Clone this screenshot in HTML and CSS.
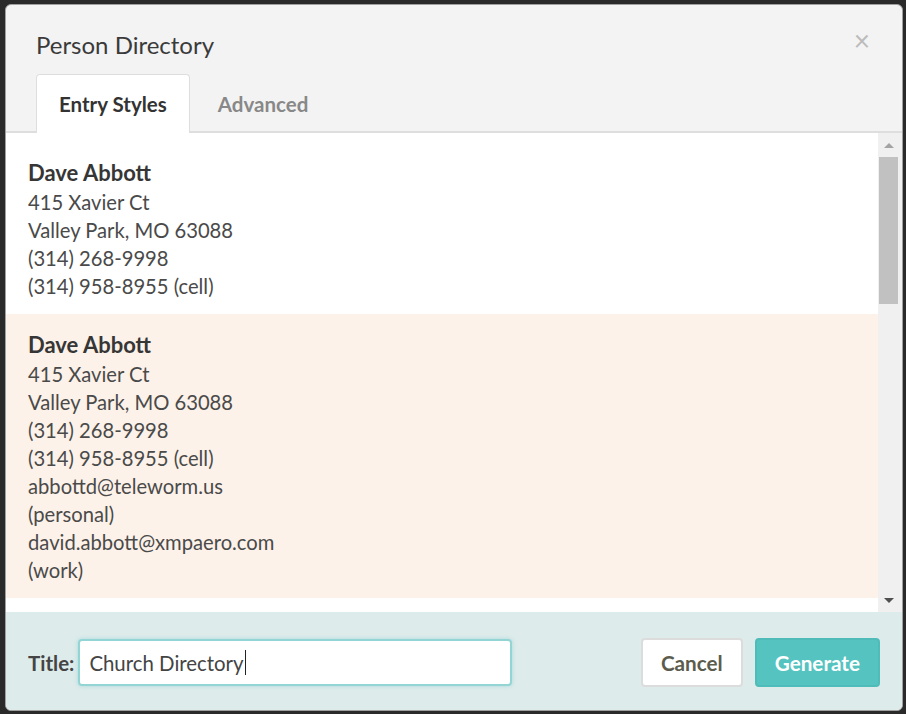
FILE: index.html
```html
<!DOCTYPE html>
<html lang="en">
<head>
    <meta charset="UTF-8">
    <meta name="viewport" content="width=device-width, initial-scale=1.0">
    <title>Person Directory</title>
    <link rel="stylesheet" href="styles.css">
</head>
<body>
    <div class="modal">
        <div class="modal-header">
            <div class="header-top">
                <h1 class="modal-title">Person Directory</h1>
                <span class="close">&times;</span>
            </div>
            <div class="tabs">
                <div class="tab active">Entry Styles</div>
                <div class="tab">Advanced</div>
            </div>
        </div>

        <div class="modal-body">
            <div class="entries">
                <div class="entry">
                    <div class="name">Dave Abbott</div>
                    <div>415 Xavier Ct</div>
                    <div>Valley Park, MO 63088</div>
                    <div>(314) 268-9998</div>
                    <div>(314) 958-8955 (cell)</div>
                </div>
                <div class="entry selected">
                    <div class="name">Dave Abbott</div>
                    <div>415 Xavier Ct</div>
                    <div>Valley Park, MO 63088</div>
                    <div>(314) 268-9998</div>
                    <div>(314) 958-8955 (cell)</div>
                    <div>abbottd@teleworm.us</div>
                    <div>(personal)</div>
                    <div>david.abbott@xmpaero.com</div>
                    <div>(work)</div>
                </div>
            </div>
            <!-- scrollbar -->
            <div class="scrollbar">
                <div class="arrow up"></div>
                <div class="track">
                    <div class="thumb"></div>
                </div>
                <div class="arrow down"></div>
            </div>
        </div>

        <div class="modal-footer">
            <label class="title-label">Title:</label>
            <div class="title-input">Church Directory<span class="caret"></span></div>
            <div class="actions">
                <button class="btn">Cancel</button>
                <button class="btn primary">Generate</button>
            </div>
        </div>
    </div>
</body>
</html>
```

FILE: styles.css
```css
* {
    box-sizing: border-box;
}

html, body {
    height: 100%;
}

body {
    margin: 0;
    padding: 4px 3px 3px 5px;
    background: #2a2a2a;
    font-family: Lato, "Open Sans", sans-serif;
    color: #333;
}

.modal {
    height: 100%;
    display: flex;
    flex-direction: column;
    background: #f3f3f3;
    border: 1px solid #a0a0a0;
    border-radius: 6px;
    overflow: hidden;
}

.modal-header {
    padding: 0 0 0 30px;
    border-bottom: 2px solid #dedede;
}

.header-top {
    display: flex;
    justify-content: space-between;
    align-items: center;
    height: 69px;
    padding-right: 32px;
}

.modal-title {
    margin: 9px 0 0;
    font-size: 24px;
    font-weight: 400;
    color: #3a3a3a;
}

.close {
    font-size: 28px;
    color: #bbb;
    margin-top: 1px;
}

.tabs {
    display: flex;
    margin-bottom: -2px;
}

.tab {
    padding: 17px 22px 17px;
    font-size: 20.5px;
    font-weight: 700;
    color: #888;
    border: 1px solid transparent;
    border-bottom: none;
    border-radius: 4px 4px 0 0;
    margin-right: 5px;
}

.tab.active {
    background: #fff;
    color: #333;
    border-color: #dedede;
}

.modal-body {
    flex: 1;
    display: flex;
    background: #fff;
    min-height: 0;
}

.entries {
    flex: 1;
    padding-top: 9px;
    font-size: 20.2px;
    line-height: 28px;
    color: #4a4a4a;
}

.entry {
    padding: 16px 22px 14px;
}

.entry.selected {
    background: #fdf2e9;
}

.name {
    font-size: 22px;
    font-weight: 700;
    line-height: 30px;
    color: #363636;
}

.scrollbar {
    width: 24px;
    display: flex;
    flex-direction: column;
    background: #f0f0f0;
    padding: 0 4px 0 1px;
}

.arrow {
    height: 24px;
    display: flex;
    align-items: center;
    justify-content: center;
}

.arrow::before {
    content: "";
    border-left: 5px solid transparent;
    border-right: 5px solid transparent;
}

.arrow.up::before {
    border-bottom: 5px solid #a3a3a3;
}

.arrow.down::before {
    border-top: 5px solid #505050;
}

.track {
    flex: 1;
}

.thumb {
    height: 147px;
    background: #c1c1c1;
}

.modal-footer {
    height: 98px;
    display: flex;
    align-items: center;
    padding: 3px 22px 0 22px;
    background: #deebeb;
}

.title-label {
    font-size: 20.5px;
    font-weight: 700;
    color: #444;
    margin-right: 4px;
}

.title-input {
    width: 434px;
    height: 47px;
    display: flex;
    align-items: center;
    padding: 0 9px;
    background: #fff;
    border: 2px solid #93d5d4;
    border-radius: 4px;
    box-shadow: 0 0 4px rgba(120, 200, 200, 0.5);
    font-size: 20.4px;
    color: #444;
}

.caret {
    display: inline-block;
    width: 1px;
    height: 25px;
    background: #222;
    margin-left: 1px;
}

.actions {
    margin-left: auto;
    display: flex;
    gap: 12px;
}

.btn {
    height: 49px;
    padding: 0 18px;
    font-family: Lato, sans-serif;
    font-size: 20.7px;
    font-weight: 700;
    color: #5c5c4c;
    background: #fff;
    border: 2px solid #dcdcdc;
    border-radius: 4px;
}

.btn.primary {
    color: #fff;
    background: #55c3c0;
    border-color: #4fbcb9;
}
```
